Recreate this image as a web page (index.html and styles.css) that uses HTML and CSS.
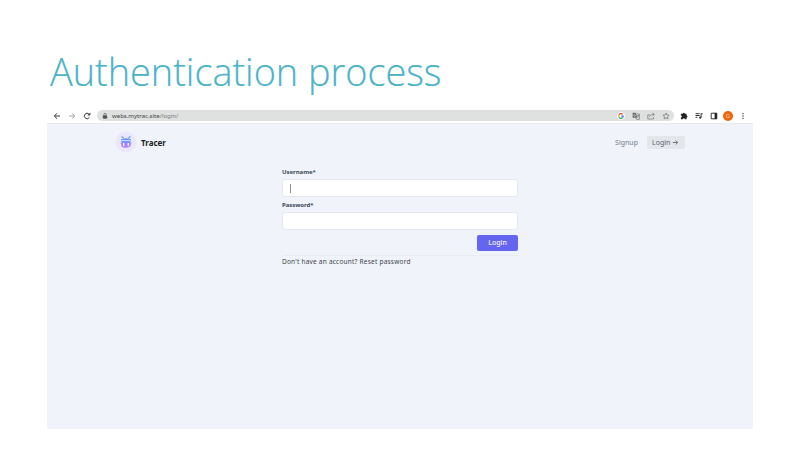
FILE: index.html
```html
<!DOCTYPE html>
<html lang="en">
<head>
<meta charset="utf-8">
<title>Authentication process</title>
<link rel="stylesheet" href="styles.css">
</head>
<body>
<main class="slide">
  <h1 class="title">Authentication process</h1>
  <section class="browser">
    <div class="toolbar">
      <svg class="icon back" viewBox="0 0 8 8"><path d="M7 4H1.5M4 1.3 1.3 4 4 6.7"/></svg>
      <svg class="icon forward" viewBox="0 0 8 8"><path d="M1 4h5.5M4 1.3 6.7 4 4 6.7"/></svg>
      <svg class="icon reload" viewBox="0 0 8 8"><path d="M6.4 5.3A2.7 2.7 0 1 1 6 2.1L6.8 3M6.9.9V3H4.8"/></svg>
      <div class="address">
        <svg class="lock" viewBox="0 0 6 8"><path d="M1.8 3.7V2.6a1.2 1.2 0 0 1 2.4 0v1.1"/><rect x="1.2" y="3.7" width="3.6" height="2.6" rx=".4"/></svg>
        <span class="url"><b>webs.mytrac.site</b>/login/</span>
        <svg class="google" viewBox="0 0 8 8"><circle cx="4" cy="4" r="3.8" fill="#fff"/><g fill="none" stroke-width="1.2"><path stroke="#ea4335" d="M1.9 3A2.3 2.3 0 0 1 5.7 2.4"/><path stroke="#fbbc05" d="M1.9 3a2.3 2.3 0 0 0 0 2"/><path stroke="#34a853" d="M1.9 5a2.3 2.3 0 0 0 3.7.7"/><path stroke="#4285f4" d="M5.6 5.7A2.3 2.3 0 0 0 6.3 4.1H4.1"/></g></svg>
        <svg class="pageicon translate" viewBox="0 0 8 8"><path class="solid" d="M.6.8h3.2l1.5 5H.6z"/><path d="M4.6 2h2.8v5.3H4.6l-.6-1.5M5 3.8h2M6.5 3.3Q6.3 4.9 5.2 5.6"/><path class="light" d="M3.4 2.7a1 1 0 1 0 .1 1.1h-.9"/></svg>
        <svg class="pageicon share" viewBox="0 0 8 8"><path d="M2.5 2.8H.8v4.2h5.7V5.3M2.5 5c.2-1.8 1.3-2.5 3-2.5h1.8M5.4.8l1.9 1.7-1.9 1.7"/></svg>
        <svg class="pageicon star" viewBox="0 0 8 8"><path d="m4 1 .9 2 2.2.2-1.6 1.5.4 2.2L4 5.8 2.1 6.9l.4-2.2L.9 3.2 3.1 3z"/></svg>
      </div>
      <svg class="icon puzzle" viewBox="0 0 8 8"><path class="fill" d="M.9 1.8h1.9a1 1 0 1 1 2 0h1.7v1.7a1 1 0 1 1 0 2v1.7H4.8a1 1 0 0 0-2 0H.9V5.4a1 1 0 0 0 0-2z"/></svg>
      <svg class="icon media" viewBox="0 0 8 8"><path d="M.5 1.7h4.2M.5 3.5h4.2M.5 5.3h2M6.1 5.5V1.7h1.6"/><circle class="fill" cx="5.2" cy="5.6" r="1.1"/></svg>
      <svg class="icon panel" viewBox="0 0 8 8"><path d="M1.2 1.2h5.6v5.6H1.2z"/><path class="fill" d="M4.6 1h2.2v6H4.6z"/></svg>
      <span class="avatar">G</span>
      <svg class="menu" viewBox="0 0 4 8"><circle cx="2" cy="1.7" r=".7"/><circle cx="2" cy="4" r=".7"/><circle cx="2" cy="6.3" r=".7"/></svg>
    </div>
    <div class="page">
      <header class="header">
        <svg class="logo" viewBox="0 0 22 22">
          <defs><linearGradient id="bug" x1="0" y1="0" x2="0" y2="1"><stop offset="0" stop-color="#6b9cff"/><stop offset=".45" stop-color="#a184fc"/><stop offset="1" stop-color="#bd7dfc"/></linearGradient></defs>
          <circle cx="11" cy="11" r="10.5" fill="#ebe7fd"/>
          <g fill="none" stroke="#6ba1f8" stroke-width="1.2"><path d="M6.5 5.5 9 7.5M15.5 5.5 13 7.5M6 8.7h10"/></g>
          <path fill="#6c94fc" d="M8 8.5Q11 5.5 14 8.5z"/>
          <path fill="url(#bug)" d="M6.3 10h9.4v4.7q-1 2.1-4.7 2.1t-4.7-2.1z"/>
          <path d="M8.7 12v3M13.3 12v3" stroke="#f2edff" stroke-width="1.4"/>
          <path d="M5.5 12.6h1M15.5 12.6h1" stroke="#a886fb" stroke-width=".9"/>
        </svg>
        <span class="brand">Tracer</span>
        <nav class="nav">
          <a class="signup">Signup</a>
          <a class="login-link"><span>Login</span><svg viewBox="0 0 8 8"><path d="M1 4h5.5M4.2 1.7 6.5 4 4.2 6.3"/></svg></a>
        </nav>
      </header>
      <form class="form">
        <label for="username">Username*</label>
        <div class="field" id="username"><i class="caret"></i></div>
        <label for="password">Password*</label>
        <div class="field" id="password"></div>
        <button class="submit" type="button">Login</button>
        <p class="help"><span>Don't have an account? Reset password</span></p>
      </form>
    </div>
  </section>
</main>
</body>
</html>
```

FILE: styles.css
```css
* { box-sizing: border-box; }
body { margin: 0; background: #fff; font-family: "Noto Sans", "Open Sans", sans-serif; }
.slide { width: 800px; height: 450px; padding: 44px 47px 0; overflow: hidden; }
.title { margin: 0 0 0 3px; width: max-content; height: 64px; font: 300 38.5px/55px "Open Sans", sans-serif; color: #4bb3c8; -webkit-text-stroke: .2px #4bb3c8; white-space: nowrap; transform: scaleX(.983); transform-origin: left; }
.browser { width: 706px; height: 321px; }
.toolbar { display: flex; align-items: center; height: 16px; padding: 0 7px 0 6px; border-bottom: 1px solid #e6e8ec; }
.icon { width: 8px; height: 8px; flex: none; fill: none; stroke: #35373a; stroke-width: 1; }
.fill { fill: #202124; stroke: none; }
.forward { margin-left: 7px; stroke: #a2a4a7; }
.reload { margin-left: 7px; }
.address { display: flex; align-items: center; width: 577px; height: 11px; margin-left: 6px; padding: 0 4px 0 5px; border-radius: 6px; background: #dfe0e0; }
.lock { width: 6px; height: 8px; fill: #4c4f53; stroke: #4c4f53; stroke-width: .7; }
.lock path { fill: none; }
.url { margin-left: 4px; font-size: 6px; line-height: 10px; letter-spacing: .02px; color: #777a7d; }
.url b { font-weight: 400; color: #3c3e41; }
.google { width: 8px; height: 8px; margin-left: auto; }
.pageicon { width: 8px; height: 8px; margin-left: 7px; fill: none; stroke: #75787b; stroke-width: .75; }
.pageicon .solid { fill: #66696c; stroke: none; }
.pageicon .light { stroke: #eee; stroke-width: .5; }
.puzzle { margin-left: 6px; }
.media, .panel { margin-left: 7px; }
.avatar { width: 10px; height: 10px; margin-left: 5px; border-radius: 50%; background: #ed6508; color: #ffd9bd; font-size: 6px; line-height: 10px; text-align: center; flex: none; }
.menu { width: 4px; height: 8px; margin-left: 8px; fill: #444; }
.page { height: 305px; background: #f0f3f9; }
.header { display: flex; align-items: center; height: 36px; padding: 0 68px; }
.logo { width: 22px; height: 22px; }
.brand { margin-left: 4px; font-size: 8px; font-weight: 700; color: #191c25; }
.nav { display: flex; align-items: center; margin-left: auto; font-size: 7px; color: #79808d; }
.login-link { display: flex; align-items: center; width: 38px; height: 13px; margin-left: 9px; padding-left: 5px; border-radius: 2px; background: #e3e7ec; color: #5c6471; }
.login-link svg { width: 7px; height: 7px; margin-left: 2px; fill: none; stroke: #5c6471; stroke-width: 1; }
.form { display: flex; flex-direction: column; width: 236px; margin-left: 235px; padding-top: 8px; }
.form label { height: 11px; font-size: 6px; font-weight: 700; line-height: 9px; letter-spacing: -.03px; color: #3d495b; }
.field { height: 18px; padding: 4px 7px; margin-bottom: 4px; border: 1px solid #e3e8ef; border-radius: 3px; background: #fff; }
.caret { display: block; width: 1px; height: 9px; background: #8c929b; }
.submit { align-self: flex-end; width: 41px; height: 16px; margin: 1px 0 4px; padding: 0; border: 0; border-radius: 2px; background: #6466f1; color: #f4f4ff; font: 500 7px/16px "Noto Sans", sans-serif; }
.help { margin: 0; border-top: 1px solid #e9edf3; color: #42464c; font-size: 6.5px; letter-spacing: .22px; line-height: 11px; }
```
